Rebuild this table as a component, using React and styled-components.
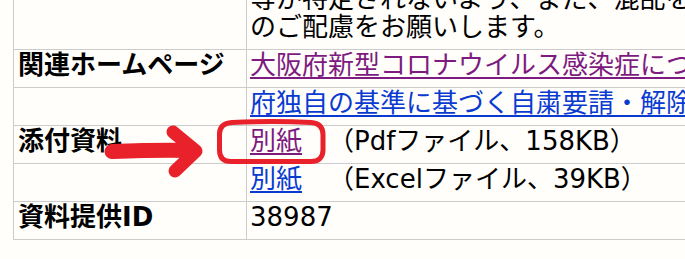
import React from "react";
import styled, { createGlobalStyle } from "styled-components";

const GlobalStyle = createGlobalStyle`
  html, body {
    margin: 0;
    padding: 0;
    background: #fffefb;
  }
`;

const rows = [
  {
    label: "",
    lines: ["等が特定されないよう、また、混乱を招かないよう", "のご配慮をお願いします。"],
  },
  {
    label: "関連ホームページ",
    link: { text: "大阪府新型コロナウイルス感染症について", visited: true },
  },
  {
    label: "",
    link: { text: "府独自の基準に基づく自粛要請・解除について", visited: false },
  },
  {
    label: "添付資料",
    link: { text: "別紙", visited: true },
    note: "（Pdfファイル、158KB）",
  },
  {
    label: "",
    link: { text: "別紙", visited: false },
    note: "（Excelファイル、39KB）",
  },
  {
    label: "資料提供ID",
    lines: ["38987"],
  },
];

const App = () => {
  return (
    <Page lang="ja">
      <GlobalStyle />
      <Sheet>
        {rows.map((row, idx) => (
          <Row key={idx}>
            <Label>{row.label}</Label>
            <Value>
              {row.lines &&
                row.lines.map((line, i) => <Line key={i}>{line}</Line>)}
              {row.link && (
                <Line>
                  <Link href="#" $visited={row.link.visited}>
                    {row.link.text}
                  </Link>
                  {row.note && <Note>{row.note}</Note>}
                </Line>
              )}
            </Value>
          </Row>
        ))}
      </Sheet>
      <Marker viewBox="0 0 685 259" width="685" height="259">
        {/* ring around the first attachment */}
        <path
          d="M232 122.5 C262 121 292 121.5 311 122.5 C320 123 323 128 323 135 L323 150 C323 157 319 161.5 311 161.5 L231 161.5 C223 161.5 219.5 157 219.5 150 L219.5 134 C219.5 127 224 123 232 122.5 Z"
          fill="none"
          stroke="#e8212b"
          strokeWidth="5"
          strokeLinejoin="round"
        />
        {/* arrow pointing at it */}
        <path
          d="M112 151.5 C140 150.5 165 150 190 150.5"
          fill="none"
          stroke="#e8212b"
          strokeWidth="15"
          strokeLinecap="round"
        />
        <path
          d="M173 132 L196 151 L175 171"
          fill="none"
          stroke="#e8212b"
          strokeWidth="13"
          strokeLinecap="round"
          strokeLinejoin="round"
        />
      </Marker>
    </Page>
  );
};

const Page = styled.div`
  position: relative;
  width: 685px;
  height: 259px;
  overflow: hidden;
  background: #fffefb;
  font-family: "DejaVu Sans", "Noto Sans CJK JP", sans-serif;
  font-size: 26px;
  line-height: 28px;
  color: #000;
`;

const Sheet = styled.div`
  display: flex;
  flex-direction: column;
  width: 900px;
  margin: -16px 0 0 13px;
  border-left: 1px solid #cccccc;
`;

const Row = styled.div`
  display: grid;
  grid-template-columns: 233px 1fr;
  border-bottom: 1px solid #cccccc;
`;

const Label = styled.div`
  box-sizing: border-box;
  padding: 1px 4px 8px;
  border-right: 1px solid #cccccc;
  font-weight: 700;
  white-space: nowrap;
`;

const Value = styled.div`
  padding: 1px 3px 8px;
  white-space: nowrap;
`;

const Line = styled.div`
  height: 28px;
`;

const Link = styled.a`
  color: ${(p) => (p.$visited ? "#7d1b80" : "#0a3bd1")};
  text-decoration: underline;
  text-decoration-thickness: 2px;
  text-underline-offset: 3px;
`;

/* file info sits a full-width space after the link */
const Note = styled.span`
  margin-left: 26px;
`;

const Marker = styled.svg`
  position: absolute;
  left: 0;
  top: 0;
  pointer-events: none;
`;

export default App;
